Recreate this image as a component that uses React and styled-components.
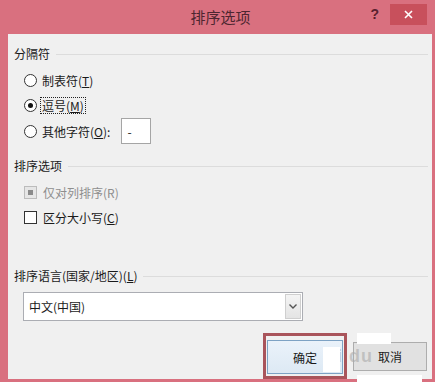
import React from "react";
import styled, { createGlobalStyle } from "styled-components";

const GlobalStyle = createGlobalStyle`
  html, body {
    margin: 0;
    padding: 0;
    background: #d9707f;
  }
  body {
    font-family: "Noto Sans CJK SC", "Noto Sans", sans-serif;
    font-size: 12px;
    color: #1a1a1a;
  }
`;

const Frame = styled.div`
  width: 435px;
  height: 382px;
  background: #d9707f;
  display: flex;
  flex-direction: column;
  position: relative;
  overflow: hidden;
`;

const TitleBar = styled.div`
  height: 34px;
  flex: none;
  display: flex;
  align-items: center;
  justify-content: center;
  position: relative;
`;

const Title = styled.div`
  font-size: 15px;
  color: #4d2630;
  margin-top: -1px;
  margin-left: 6px;
`;

const Controls = styled.div`
  position: absolute;
  top: 4px;
  right: 8px;
  display: flex;
  align-items: center;
`;

const Help = styled.span`
  font-family: "Liberation Sans", sans-serif;
  font-weight: bold;
  font-size: 14px;
  color: #5a1f2e;
  margin-right: 11px;
  margin-top: -2px;
`;

const Close = styled.div`
  width: 37px;
  height: 21px;
  background: #c8505c;
  color: #fff;
  display: flex;
  align-items: center;
  justify-content: center;
`;

const Body = styled.div`
  flex: 1;
  margin: 0 3px 3px 8px;
  background: #f0f0f0;
  padding: 12px 5px 0 6px;
  display: flex;
  flex-direction: column;
`;

const Header = styled.div`
  height: 16px;
  line-height: 16px;
  display: flex;
  align-items: center;
  margin-top: ${(p) => p.$top || 0}px;
  color: #1a1a1a;

  &::after {
    content: "";
    flex: 1;
    height: 1px;
    background: #dcdcdc;
    margin-left: 6px;
    margin-right: -1px;
  }
`;

const Options = styled.div`
  display: flex;
  flex-direction: column;
  margin-top: 6px;
  padding-left: 10px;
`;

const Row = styled.div`
  height: ${(p) => p.$h || 25}px;
  display: flex;
  align-items: center;
  color: ${(p) => (p.$disabled ? "#8e8e8e" : "#1a1a1a")};
`;

const Radio = styled.span`
  width: 13px;
  height: 13px;
  box-sizing: border-box;
  border-radius: 50%;
  border: 1px solid #333;
  background: #fff;
  display: flex;
  align-items: center;
  justify-content: center;
  margin-right: 3px;

  &::after {
    content: "";
    width: 5px;
    height: 5px;
    border-radius: 50%;
    background: ${(p) => (p.$checked ? "#111" : "transparent")};
  }
`;

const Check = styled.span`
  width: 13px;
  height: 13px;
  box-sizing: border-box;
  border: 1px solid ${(p) => (p.$disabled ? "#bcbcbc" : "#333")};
  background: ${(p) => (p.$disabled ? "#e6e6e6" : "#fff")};
  display: flex;
  align-items: center;
  justify-content: center;
  margin-right: 4px;

  &::after {
    content: "";
    width: 5px;
    height: 5px;
    background: ${(p) => (p.$mixed ? "#8a8a8a" : "transparent")};
  }
`;

const Label = styled.span`
  padding: 0 1px;
  border: 1px dotted ${(p) => (p.$focus ? "#222" : "transparent")};
  line-height: 15px;
`;

const SmallInput = styled.div`
  width: 30px;
  height: 26px;
  box-sizing: border-box;
  border: 1px solid #a5a5a5;
  background: #fff;
  margin-left: 9px;
  padding: 4px 0 0 5px;
`;

const Select = styled.div`
  width: 280px;
  height: 29px;
  box-sizing: border-box;
  margin: 8px 0 0 9px;
  border: 1px solid #abadb3;
  background: #fff;
  display: flex;
  align-items: center;
  padding-left: 5px;
`;

const SelectText = styled.span`
  flex: 1;
`;

const DropButton = styled.div`
  width: 16px;
  height: 25px;
  box-sizing: border-box;
  margin-right: 1px;
  border: 1px solid #cfcfcf;
  background: linear-gradient(#f4f4f4, #e4e4e4);
  display: flex;
  align-items: center;
  justify-content: center;
`;

const Buttons = styled.div`
  margin-top: 12px;
  display: flex;
  justify-content: flex-end;
  align-items: flex-start;
  gap: 6px;
`;

const Highlight = styled.div`
  border: 3px solid #a9545b;
  padding: 4px 1px 2px;
`;

const Button = styled.div`
  width: ${(p) => p.$w}px;
  height: ${(p) => p.$h}px;
  box-sizing: border-box;
  display: flex;
  align-items: center;
  justify-content: center;
  border: 1px solid ${(p) => (p.$primary ? "#7da2c4" : "#adadad")};
  background: ${(p) =>
    p.$primary ? "linear-gradient(#eaf2fa, #dde9f4)" : "#e1e1e1"};
  margin-top: ${(p) => p.$top || 0}px;
`;

const Patch = styled.div`
  position: absolute;
  background: #fff;
`;

const Watermark = styled.div`
  position: absolute;
  left: 326px;
  top: 346px;
  font-family: "Liberation Sans", sans-serif;
  font-size: 18px;
  font-weight: bold;
  color: rgba(170, 170, 170, 0.6);
  letter-spacing: 1px;
  pointer-events: none;
`;

export default function App() {
  return (
    <>
      <GlobalStyle />
      <Frame>
        <TitleBar>
          <Title>排序选项</Title>
          <Controls>
            <Help>?</Help>
            <Close>
              <svg width="9" height="9" viewBox="0 0 9 9">
                <path d="M1 1 L8 8 M8 1 L1 8" stroke="#fff" strokeWidth="1.6" />
              </svg>
            </Close>
          </Controls>
        </TitleBar>
        <Body>
          <Header>分隔符</Header>
          <Options>
            <Row>
              <Radio />
              <Label>制表符(<u>T</u>)</Label>
            </Row>
            <Row>
              <Radio $checked />
              <Label $focus>逗号(<u>M</u>)</Label>
            </Row>
            <Row $h={26}>
              <Radio />
              <Label>其他字符(<u>O</u>):</Label>
              <SmallInput>-</SmallInput>
            </Row>
          </Options>

          <Header $top={14}>排序选项</Header>
          <Options>
            <Row $disabled>
              <Check $disabled $mixed />
              <Label>仅对列排序(R)</Label>
            </Row>
            <Row>
              <Check />
              <Label>区分大小写(<u>C</u>)</Label>
            </Row>
          </Options>

          <Header $top={38}>排序语言(国家/地区)(<u>L</u>)</Header>
          <Select>
            <SelectText>中文(中国)</SelectText>
            <DropButton>
              <svg width="8" height="5" viewBox="0 0 8 5">
                <path d="M0.5 0.5 L4 4 L7.5 0.5" stroke="#555" strokeWidth="1.4" fill="none" />
              </svg>
            </DropButton>
          </Select>

          <Buttons>
            <Highlight>
              <Button $primary $w={76} $h={34}>确定</Button>
            </Highlight>
            <Button $w={74} $h={29} $top={9}>取消</Button>
          </Buttons>
        </Body>
        <Watermark>ai du</Watermark>
        <Patch style={{ left: 323, top: 347, width: 17, height: 25 }} />
        <Patch style={{ left: 357, top: 333, width: 34, height: 11 }} />
        <Patch style={{ left: 357, top: 375, width: 65, height: 7 }} />
      </Frame>
    </>
  );
}
